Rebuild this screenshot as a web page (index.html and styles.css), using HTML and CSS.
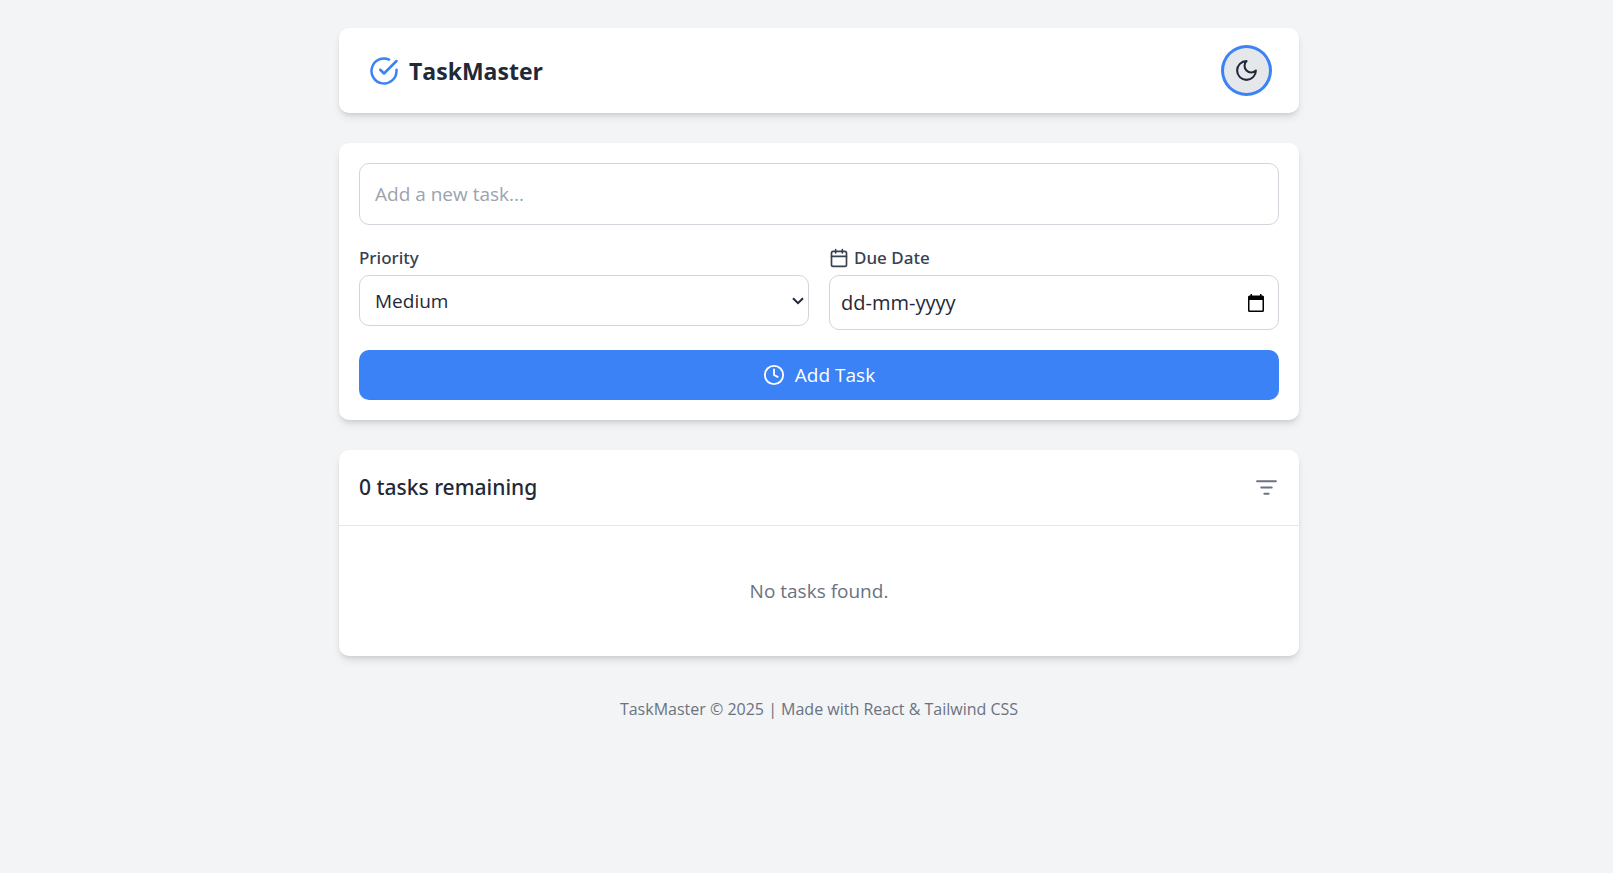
FILE: index.html
```html
<!DOCTYPE html>
<html lang="en">
<head>
<meta charset="utf-8">
<meta name="viewport" content="width=device-width, initial-scale=1">
<title>TaskMaster</title>
<link rel="stylesheet" href="styles.css">
</head>
<body>
<div class="page">
  <header class="card header">
    <div class="brand">
      <svg class="icon brand-icon" viewBox="0 0 24 24" aria-hidden="true"><path d="M22 11.08V12a10 10 0 1 1-5.93-9.14"/><path d="m9 11 3 3L22 4"/></svg>
      <h1 class="brand-name">TaskMaster</h1>
    </div>
    <button class="theme-toggle" type="button" aria-label="Switch to dark mode">
      <svg class="icon icon-md" viewBox="0 0 24 24" aria-hidden="true"><path d="M12 3a6 6 0 0 0 9 9 9 9 0 1 1-9-9Z"/></svg>
    </button>
  </header>

  <main class="main">
    <form class="card form">
      <input class="control task-input" type="text" placeholder="Add a new task..." aria-label="New task">
      <div class="fields">
        <div class="field">
          <label class="label" for="priority">Priority</label>
          <div class="select-wrap">
            <select class="control select" id="priority">
              <option>Low</option>
              <option selected>Medium</option>
              <option>High</option>
            </select>
            <svg class="chevron" viewBox="0 0 12 8" aria-hidden="true"><path d="M1 1.2 6 6.2 11 1.2"/></svg>
          </div>
        </div>
        <div class="field">
          <label class="label" for="due">
            <svg class="icon icon-sm" viewBox="0 0 24 24" aria-hidden="true"><path d="M8 2v4M16 2v4M3 10h18"/><rect x="3" y="4" width="18" height="18" rx="2"/></svg>
            Due Date
          </label>
          <div class="control date">
            <input class="date-input" id="due" type="text" placeholder="dd-mm-yyyy">
            <button class="plain-button" type="button" aria-label="Open calendar">
              <svg class="date-icon" viewBox="0 0 16 18" aria-hidden="true"><path fill-rule="evenodd" d="M2.500 0h1.500v1.500h8V0h1.500v1.500h1A1.500 1.500 0 0 1 16 3v13.500a1.500 1.500 0 0 1-1.500 1.500h-13A1.500 1.500 0 0 1 0 16.500V3a1.500 1.500 0 0 1 1.500-1.500h1ZM1.500 6v10.500h13V6Z"/></svg>
            </button>
          </div>
        </div>
      </div>
      <button class="submit" type="submit">
        <svg class="icon icon-clock" viewBox="0 0 24 24" aria-hidden="true"><circle cx="12" cy="12" r="10"/><path d="M12 6v6l4 2"/></svg>
        Add Task
      </button>
    </form>

    <section class="card">
      <div class="list-header">
        <h2 class="list-title">0 tasks remaining</h2>
        <button class="plain-button filter" type="button" aria-label="Filter tasks">
          <svg class="icon icon-md" viewBox="0 0 24 24" aria-hidden="true"><path d="M3 6h18M7 12h10M10 18h4"/></svg>
        </button>
      </div>
      <p class="empty">No tasks found.</p>
    </section>
  </main>

  <footer class="footer">TaskMaster © 2025 | Made with React &amp; Tailwind CSS</footer>
</div>
</body>
</html>
```
FILE: styles.css
```css
*, *::before, *::after {
  box-sizing: border-box;
}

body {
  margin: 0;
  min-height: 100vh;
  padding-left: 25px;
  background: #f3f4f6;
  color: #1f2937;
  font-family: "Segoe UI", "Open Sans", "Noto Sans", sans-serif;
  font-size: 19px;
  line-height: 30px;
}

h1, h2, p {
  margin: 0;
}

input, select, button {
  font: inherit;
  color: inherit;
}

.page {
  max-width: 1000px;
  margin: 0 auto;
  padding: 28px 20px 40px;
}

.card {
  background: #fff;
  border-radius: 10px;
  box-shadow: 0 5px 8px -1px rgba(0, 0, 0, 0.1), 0 3px 5px -2px rgba(0, 0, 0, 0.1);
}

.icon {
  flex: none;
  fill: none;
  stroke: currentColor;
  stroke-width: 2;
  stroke-linecap: round;
  stroke-linejoin: round;
}

.icon-md {
  width: 25px;
  height: 25px;
}

.icon-clock {
  width: 22px;
  height: 22px;
}

.icon-sm {
  width: 20px;
  height: 20px;
}

.header {
  display: flex;
  align-items: center;
  justify-content: space-between;
  padding: 20px 30px;
}

.brand {
  display: flex;
  align-items: center;
  gap: 10px;
}

.brand-icon {
  width: 30px;
  height: 30px;
  color: #3b82f6;
}

.brand-name {
  font-size: 23px;
  line-height: 40px;
  font-weight: 700;
}

.theme-toggle {
  display: grid;
  place-items: center;
  width: 45px;
  height: 45px;
  padding: 0;
  border: 0;
  border-radius: 50%;
  background: #e5e7eb;
  box-shadow: 0 0 0 3px #3b82f6;
}

.main {
  display: grid;
  gap: 30px;
  margin-top: 30px;
}

.form {
  display: grid;
  gap: 20px;
  padding: 20px;
}

.control {
  width: 100%;
  border: 1px solid #d1d5db;
  border-radius: 10px;
  background: #fff;
}

.task-input {
  padding: 15px;
}

.task-input::placeholder {
  color: #9ca3af;
  opacity: 1;
}

.fields {
  display: grid;
  grid-template-columns: 1fr 1fr;
  align-items: start;
  gap: 20px;
}

.label,
.list-title {
  font-family: "Segoe UI", "Noto Sans", sans-serif;
  font-weight: 500;
}

.label {
  display: flex;
  align-items: center;
  gap: 5px;
  margin-bottom: 5px;
  font-size: 17px;
  line-height: 25px;
  color: #374151;
}

.select-wrap {
  display: grid;
  align-items: center;
}

.select-wrap > * {
  grid-area: 1 / 1;
}

.select {
  appearance: none;
  padding: 10px 30px 9px 15px;
}

.chevron {
  justify-self: end;
  width: 12px;
  height: 8px;
  margin-right: 5px;
  fill: none;
  stroke: currentColor;
  stroke-width: 2;
  pointer-events: none;
}

.date {
  display: flex;
  align-items: center;
  justify-content: space-between;
  padding: 12px 14px 11px 11px;
}

.date-input {
  flex: 1;
  min-width: 0;
  padding: 0;
  border: 0;
  outline: 0;
  background: none;
  font-size: 20px;
}

.date-input::placeholder {
  color: #1f2937;
  opacity: 1;
}

.plain-button {
  display: grid;
  padding: 0;
  border: 0;
  background: none;
}

.date-icon {
  width: 16px;
  height: 18px;
  fill: #000;
}

.submit {
  display: flex;
  align-items: center;
  justify-content: center;
  gap: 10px;
  padding: 10px;
  border: 0;
  border-radius: 10px;
  background: #3b82f6;
  color: #fff;
}

.list-header {
  display: flex;
  align-items: center;
  justify-content: space-between;
  padding: 20px;
  border-bottom: 1px solid #e5e7eb;
}

.list-title {
  font-size: 21px;
  line-height: 35px;
}

.filter {
  color: #6b7280;
}

.empty {
  padding: 50px 20px;
  text-align: center;
  color: #6b7280;
}

.footer {
  margin-top: 40px;
  text-align: center;
  font-size: 16px;
  line-height: 27px;
  color: #6b7280;
}
```
